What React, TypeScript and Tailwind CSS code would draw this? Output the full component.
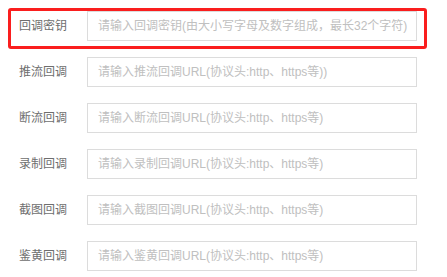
import React from "react";

const rows = [
  { label: "回调密钥", ph: "请输入回调密钥(由大小写字母及数字组成，最长32个字符)" },
  { label: "推流回调", ph: "请输入推流回调URL(协议头:http、https等))" },
  { label: "断流回调", ph: "请输入断流回调URL(协议头:http、https等)" },
  { label: "录制回调", ph: "请输入录制回调URL(协议头:http、https等)" },
  { label: "截图回调", ph: "请输入截图回调URL(协议头:http、https等)" },
  { label: "鉴黄回调", ph: "请输入鉴黄回调URL(协议头:http、https等)" },
];

export default function App() {
  return (
    <div
      className="relative w-[447px] h-[277px] bg-white overflow-hidden"
      style={{ fontFamily: '"Liberation Sans", "Noto Sans CJK SC", sans-serif' }}
    >
      <div className="flex flex-col gap-[16px] pt-[11px] pl-[19px]">
        {rows.map((r) => (
          <div key={r.label} className="flex items-center h-[30px]">
            <div className="w-[68px] text-[12px] text-[#6e6e6e] leading-none">{r.label}</div>
            <div className="w-[330px] h-[30px] border border-[#dcdcdc] flex items-center pl-[10px] text-[12px] text-[#c0c0c0] whitespace-nowrap overflow-hidden">
              {r.ph}
            </div>
          </div>
        ))}
      </div>
      <div className="absolute left-[8px] top-[8px] w-[419px] h-[41px] border-[3px] border-[#fa1e1e] rounded-[3px]" />
    </div>
  );
}
